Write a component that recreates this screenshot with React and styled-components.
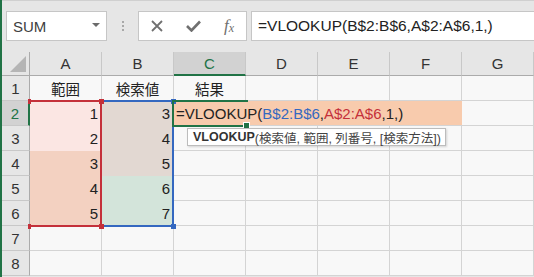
import React from "react";
import styled, { createGlobalStyle } from "styled-components";

const GREEN = "#217346";
const RED = "#c4303a";
const BLUE = "#3468c0";

const GlobalStyle = createGlobalStyle`
  html, body { margin: 0; padding: 0; }
  body {
    width: 534px; height: 277px; overflow: hidden; background: #e6e6e6;
    font-family: "Liberation Sans", "Noto Sans CJK JP", sans-serif;
  }
`;

const Window = styled.div`
  display: flex;
  width: 534px;
  height: 277px;
  box-sizing: border-box;
  border-left: 2px solid ${GREEN};
  overflow: hidden;
`;

const Main = styled.div`
  flex: 1;
  min-width: 0;
  display: flex;
  flex-direction: column;
`;

const Toolbar = styled.div`
  height: 52px;
  flex: none;
  box-sizing: border-box;
  border-top: 1px solid #d0d0d0;
  background: #e6e6e6;
  display: flex;
  align-items: flex-start;
  padding: 10px 0 0 4px;
`;

const NameBox = styled.div`
  width: 101px;
  height: 30px;
  flex: none;
  box-sizing: border-box;
  border: 1px solid #c6c6c6;
  background: #fff;
  display: flex;
  align-items: center;
  justify-content: space-between;
  padding: 0 6px 0 6px;
  font-size: 15px;
  color: #404040;
`;

const Caret = styled.span`
  width: 0;
  height: 0;
  border-left: 4px solid transparent;
  border-right: 4px solid transparent;
  border-top: 4px solid #6b6b6b;
  margin-top: -3px;
`;

const Grip = styled.div`
  width: 31px;
  height: 30px;
  flex: none;
  display: flex;
  flex-direction: column;
  align-items: center;
  justify-content: center;
  gap: 2px;
`;

const Dot = styled.span`
  width: 2px;
  height: 2px;
  background: #a8a8a8;
`;

const FxButtons = styled.div`
  width: 109px;
  height: 30px;
  flex: none;
  box-sizing: border-box;
  border: 1px solid #c6c6c6;
  background: #fff;
  display: grid;
  grid-template-columns: repeat(3, 36px);
  align-items: center;
  justify-items: center;
`;

const IconSlot = styled.span`
  display: flex;
  align-items: center;
  justify-content: center;
  height: 28px;
  color: #6f6f6f;
`;

const FxText = styled.span`
  font-family: "Liberation Serif", "DejaVu Serif", serif;
  font-style: italic;
  font-size: 17px;
  color: #6f6f6f;
  & sub { font-size: 12px; vertical-align: -1px; }
`;

const FormulaInput = styled.div`
  flex: 1;
  margin-left: 4px;
  margin-right: -6px;
  height: 30px;
  box-sizing: border-box;
  border: 1px solid #c6c6c6;
  background: #fff;
  display: flex;
  align-items: center;
  padding-left: 6px;
  font-size: 15.5px;
  color: #222;
  white-space: nowrap;
`;

const Sheet = styled.div`
  position: relative;
  display: grid;
  grid-template-columns: 28px repeat(7, 72px);
  grid-template-rows: 24px repeat(8, 25px);
  background: #f8f8f8;
`;

const place = (p) => `grid-row: ${p.$r}; grid-column: ${p.$c};`;

const ColHeader = styled.div`
  ${place}
  box-sizing: border-box;
  background: ${(p) => (p.$active ? "#d2d2d2" : "#e6e6e6")};
  border-right: 1px solid #c8c8c8;
  border-bottom: ${(p) => (p.$active ? `2px solid ${GREEN}` : "1px solid #ababab")};
  display: flex;
  align-items: center;
  justify-content: center;
  font-size: 15px;
  color: ${(p) => (p.$active ? GREEN : "#333")};
`;

const Corner = styled.div`
  grid-row: 1;
  grid-column: 1;
  box-sizing: border-box;
  background: #e6e6e6;
  border-right: 1px solid #ababab;
  border-bottom: 1px solid #ababab;
  position: relative;
  &::after {
    content: "";
    position: absolute;
    right: 3px;
    bottom: 3px;
    width: 16px;
    height: 16px;
    background: #b5b5b5;
    clip-path: polygon(100% 0, 100% 100%, 0 100%);
  }
`;

const RowHeader = styled.div`
  ${place}
  box-sizing: border-box;
  background: ${(p) => (p.$active ? "#d2d2d2" : "#e6e6e6")};
  border-right: ${(p) => (p.$active ? `2px solid ${GREEN}` : "1px solid #ababab")};
  border-bottom: 1px solid #c8c8c8;
  display: flex;
  align-items: center;
  justify-content: center;
  font-size: 15px;
  color: ${(p) => (p.$active ? GREEN : "#333")};
`;

const Cell = styled.div`
  ${place}
  box-sizing: border-box;
  background: ${(p) => p.$fill || "#f8f8f8"};
  border-right: 1px solid ${(p) => p.$fill || "#d4d4d4"};
  border-bottom: 1px solid ${(p) => p.$fill || "#d4d4d4"};
  display: flex;
  align-items: center;
  justify-content: ${(p) => (p.$align === "right" ? "flex-end" : "center")};
  padding: 0 3px;
  font-size: ${(p) => (p.$cjk ? "14.5px" : "15px")};
  color: #222;
  white-space: nowrap;
`;

const EditCell = styled.div`
  grid-row: 3;
  grid-column: 4 / 8;
  box-sizing: border-box;
  background: #f8cbad;
  border-bottom: 1px solid #d4d4d4;
  display: flex;
  align-items: center;
  padding-left: 2px;
  font-size: 15px;
  color: #222;
  white-space: nowrap;
  z-index: 1;
`;

const Ref = styled.span`
  color: ${(p) => p.$color};
`;

const RangeBox = styled.div`
  ${place}
  margin: -1px 0 -1px 0;
  border-top: 2px solid ${(p) => p.$color};
  border-right: 2px solid ${(p) => p.$color};
  border-bottom: 2px solid ${(p) => p.$color};
  position: relative;
  pointer-events: none;
  z-index: 2;
`;

const Handle = styled.span`
  position: absolute;
  width: ${(p) => p.$w || 5}px;
  height: 5px;
  background: ${(p) => p.$color};
  ${(p) => (p.$top ? "top: -3.5px;" : "bottom: -3.5px;")}
  ${(p) => (p.$right ? "right: -3.5px;" : "left: -2px;")}
`;

const ActiveBox = styled.div`
  grid-row: 3;
  grid-column: 4 / 5;
  margin: -1px -2px -1px -2px;
  border-top: 2px solid ${GREEN};
  border-left: 2px solid ${GREEN};
  border-bottom: 2px solid ${GREEN};
  position: relative;
  pointer-events: none;
  z-index: 3;
`;

const FillHandle = styled.span`
  position: absolute;
  right: -1px;
  bottom: -3px;
  width: 5px;
  height: 5px;
  background: ${GREEN};
  box-shadow: 0 0 0 1px #fff;
`;

const Tooltip = styled.div`
  position: absolute;
  left: 185px;
  top: 76px;
  height: 18px;
  box-sizing: border-box;
  border: 1px solid #bcbcbc;
  background: #fff;
  box-shadow: 1px 1px 2px rgba(0, 0, 0, 0.15);
  display: flex;
  align-items: center;
  padding: 0 4px 0 5px;
  font-size: 12.5px;
  color: #444;
  white-space: nowrap;
  z-index: 5;
  & b { color: #333; }
`;

const cols = ["A", "B", "C", "D", "E", "F", "G"];
const fills = {
  A: ["#fbe6e3", "#fbe6e3", "#f3d1c1", "#f3d1c1", "#f3d1c1"],
  B: ["#e2d8d2", "#e2d8d2", "#e2d8d2", "#d3e4da", "#d3e4da"],
};

export default function App() {
  const cells = [];
  for (let r = 1; r <= 8; r++) {
    const gr = r + 1;
    cells.push(
      <RowHeader key={`h${r}`} $r={gr} $c={1} $active={r === 2}>
        {r}
      </RowHeader>
    );
    cols.forEach((c, ci) => {
      const gc = ci + 2;
      if (r === 2 && ci >= 2 && ci <= 5) return;
      let content = null;
      let align = "right";
      let cjk = false;
      let fill;
      if (r === 1) {
        align = "center";
        cjk = true;
        content = { A: "範囲", B: "検索値", C: "結果" }[c] || null;
      } else if (r >= 2 && r <= 6) {
        if (c === "A") {
          content = r - 1;
          fill = fills.A[r - 2];
        } else if (c === "B") {
          content = r + 1;
          fill = fills.B[r - 2];
        }
      }
      cells.push(
        <Cell key={`${c}${r}`} $r={gr} $c={gc} $align={align} $cjk={cjk} $fill={fill}>
          {content}
        </Cell>
      );
    });
  }

  return (
    <>
      <GlobalStyle />
      <Window>
        <Main>
          <Toolbar>
            <NameBox>
              <span>SUM</span>
              <Caret />
            </NameBox>
            <Grip>
              <Dot />
              <Dot />
              <Dot />
            </Grip>
            <FxButtons>
              <IconSlot>
                <svg width="12" height="12" viewBox="0 0 12 12">
                  <path d="M1 1 L11 11 M11 1 L1 11" stroke="#707070" strokeWidth="1.8" fill="none" />
                </svg>
              </IconSlot>
              <IconSlot>
                <svg width="15" height="12" viewBox="0 0 15 12">
                  <path d="M1 6 L5.5 10.5 L14 1.5" stroke="#707070" strokeWidth="2.6" fill="none" />
                </svg>
              </IconSlot>
              <IconSlot>
                <FxText>
                  f<sub>x</sub>
                </FxText>
              </IconSlot>
            </FxButtons>
            <FormulaInput>=VLOOKUP(B$2:B$6,A$2:A$6,1,)</FormulaInput>
          </Toolbar>
          <Sheet>
            <Corner />
            {cols.map((c, ci) => (
              <ColHeader key={c} $r={1} $c={ci + 2} $active={c === "C"}>
                {c}
              </ColHeader>
            ))}
            {cells}
            <EditCell>
              =VLOOKUP(<Ref $color={BLUE}>B$2:B$6</Ref>,<Ref $color={RED}>A$2:A$6</Ref>,1,)
            </EditCell>
            <RangeBox $c="3 / 4" $r="3 / 8" $color={BLUE}>
              <Handle $color={BLUE} $top $right />
              <Handle $color={BLUE} $right />
            </RangeBox>
            <RangeBox $c="2 / 3" $r="3 / 8" $color={RED}>
              <Handle $color={RED} $top $w={3} />
              <Handle $color={RED} $top $right />
              <Handle $color={RED} $w={3} />
              <Handle $color={RED} $right />
            </RangeBox>
            <ActiveBox>
              <FillHandle />
            </ActiveBox>
            <Tooltip>
              <b>VLOOKUP</b>(検索値, 範囲, 列番号, [検索方法])
            </Tooltip>
          </Sheet>
        </Main>
      </Window>
    </>
  );
}
